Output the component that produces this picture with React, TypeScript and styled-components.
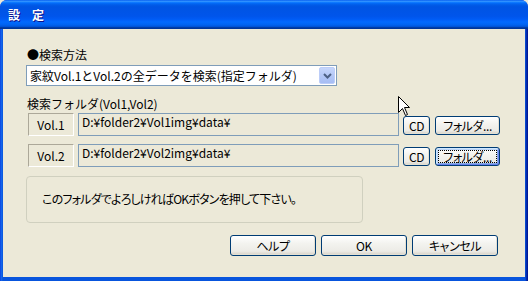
import React from "react";
import styled, { createGlobalStyle } from "styled-components";

const GlobalStyle = createGlobalStyle`
  html, body { margin: 0; padding: 0; background: #ECE9D8; }
  body { font-family: "Noto Sans CJK JP", "Noto Sans", sans-serif; font-size: 12px; }
`;

const Window = styled.div`
  position: relative;
  width: 528px;
  height: 281px;
  display: flex;
  flex-direction: column;
  border-radius: 7px 7px 0 0;
  overflow: hidden;
  background: #0831d9;
`;

const TitleBar = styled.div`
  height: 29px;
  flex: none;
  display: flex;
  align-items: center;
  padding-left: 8px;
  box-sizing: border-box;
  background: linear-gradient(
    to bottom,
    #0058ee 0%,
    #3593ff 4%,
    #288eff 6%,
    #127dff 8%,
    #036ffc 10%,
    #0262ee 14%,
    #0057e5 20%,
    #0054e3 24%,
    #0055eb 56%,
    #005bf5 66%,
    #026afe 76%,
    #0062ef 86%,
    #0052d6 92%,
    #0040ab 94%,
    #003092 100%
  );
`;

const Title = styled.span`
  color: #fff;
  font-weight: bold;
  font-size: 12px;
  line-height: 14px;
  margin-top: 1px;
  text-shadow: 1px 1px #0f1089;
`;

const Frame = styled.div`
  flex: 1;
  display: flex;
  padding: 0 3px 4px 3px;
  background: linear-gradient(to right, #0831d9 0, #166aee 1px, #0855dd 3px, #0855dd calc(100% - 3px), #001ea0 calc(100% - 1px), #00138c 100%);
`;

const Client = styled.div`
  flex: 1;
  background: #ece9d8;
  display: flex;
  flex-direction: column;
  padding: 0 0 0 23px;
  color: #000;
`;

const Label = styled.div<{ $top: number }>`
  margin-top: ${(p) => p.$top}px;
  margin-left: 1px;
  height: 14px;
  line-height: 14px;
  font-size: 12px;
  white-space: nowrap;
`;

const Select = styled.div`
  margin-top: 3px;
  width: 311px;
  height: 21px;
  box-sizing: border-box;
  border: 1px solid #7f9db9;
  background: #fff;
  display: flex;
  align-items: center;
  justify-content: space-between;
  padding: 0 1px 0 3px;
`;

const SelectText = styled.span`
  font-size: 12px;
  line-height: 14px;
  white-space: nowrap;
`;

const DropButton = styled.div`
  width: 16px;
  height: 17px;
  box-sizing: border-box;
  border-radius: 2px;
  background: linear-gradient(to bottom, #c6d6fb 0%, #b4c8f6 50%, #a6bdf4 100%);
  border: 1px solid #bccdf8;
  display: flex;
  align-items: center;
  justify-content: center;
`;

const Rows = styled.div`
  margin-top: 2px;
  margin-left: 2px;
  display: flex;
  flex-direction: column;
  gap: 8px;
`;

const Row = styled.div`
  display: flex;
  align-items: flex-end;
  height: 23px;
`;

const VolBox = styled.div`
  width: 46px;
  height: 23px;
  box-sizing: border-box;
  border-top: 1px solid #aca899;
  border-left: 1px solid #aca899;
  border-right: 1px solid #fff;
  border-bottom: 1px solid #fff;
  display: flex;
  align-items: center;
  justify-content: center;
  padding-top: 1px;
  font-size: 12px;
  line-height: 14px;
  flex: none;
`;

const PathField = styled.div`
  margin-left: 4px;
  width: 321px;
  height: 23px;
  box-sizing: border-box;
  border: 1px solid #7f9db9;
  padding: 1px 0 0 3px;
  font-size: 12px;
  line-height: 14px;
  white-space: nowrap;
  flex: none;
`;

const Button = styled.button<{ $w: number; $h: number; $focus?: boolean }>`
  position: relative;
  width: ${(p) => p.$w}px;
  height: ${(p) => p.$h}px;
  box-sizing: border-box;
  flex: none;
  padding: 0;
  margin: 0;
  border: 1px solid #003c74;
  border-radius: 3px;
  background: linear-gradient(to bottom, #ffffff 0%, #f3f3ef 40%, #ecebe6 80%, #d6d0c5 100%);
  box-shadow: ${(p) =>
    p.$focus
      ? "inset 1px 1px #cee7ff, inset -1px -1px #6982ee, inset 2px 2px #bcd4f6, inset -2px -2px #89ade4"
      : "inset -1px -1px #e3e0d3"};
  font-family: "Noto Sans CJK JP", "Noto Sans", sans-serif;
  font-size: 12px;
  line-height: 14px;
  color: #000;
  white-space: nowrap;
  font-feature-settings: "palt";
  letter-spacing: -0.4px;
  &::after {
    content: "";
    display: ${(p) => (p.$focus ? "block" : "none")};
    position: absolute;
    inset: 2px;
    border: 1px dotted #000;
  }
`;

const SmallButtons = styled.div`
  display: flex;
  gap: 5px;
  margin-left: 4px;
  margin-bottom: 1px;
`;

const InfoBox = styled.div`
  margin-top: 9px;
  width: 337px;
  height: 47px;
  box-sizing: border-box;
  border: 1px solid #d0d0bf;
  border-radius: 4px;
  display: flex;
  align-items: center;
  padding: 0 0 1px 15px;
  font-size: 12px;
  line-height: 14px;
  white-space: nowrap;
  font-feature-settings: "palt";
  letter-spacing: -0.8px;
`;

const Footer = styled.div`
  margin-top: 12px;
  display: flex;
  justify-content: flex-end;
  gap: 5px;
  padding-right: 27px;
`;

const Cursor = styled.svg`
  position: absolute;
  left: 398px;
  top: 96px;
`;

export default function App() {
  return (
    <>
      <GlobalStyle />
      <Window>
        <TitleBar>
          <Title>設　定</Title>
        </TitleBar>
        <Frame>
          <Client>
            <Label $top={19}>●検索方法</Label>
            <Select>
              <SelectText>家紋Vol.1とVol.2の全データを検索(指定フォルダ)</SelectText>
              <DropButton>
                <svg width="9" height="6" viewBox="0 0 9 6">
                  <path d="M1 1 L4.5 4.5 L8 1" fill="none" stroke="#4d6185" strokeWidth="2" />
                </svg>
              </DropButton>
            </Select>
            <Label $top={11}>検索フォルダ(Vol1,Vol2)</Label>
            <Rows>
              <Row>
                <VolBox>Vol.1</VolBox>
                <PathField>D:¥folder2¥Vol1img¥data¥</PathField>
                <SmallButtons>
                  <Button $w={27} $h={19}>CD</Button>
                  <Button $w={65} $h={19}>フォルダ...</Button>
                </SmallButtons>
              </Row>
              <Row>
                <VolBox>Vol.2</VolBox>
                <PathField>D:¥folder2¥Vol2img¥data¥</PathField>
                <SmallButtons>
                  <Button $w={27} $h={19}>CD</Button>
                  <Button $w={65} $h={19} $focus>フォルダ...</Button>
                </SmallButtons>
              </Row>
            </Rows>
            <InfoBox>このフォルダでよろしければOKボタンを押して下さい。</InfoBox>
            <Footer>
              <Button $w={86} $h={21}>ヘルプ</Button>
              <Button $w={86} $h={21}>OK</Button>
              <Button $w={86} $h={21}>キャンセル</Button>
            </Footer>
          </Client>
        </Frame>
        <Cursor width="13" height="21" viewBox="0 0 13 21">
          <path d="M0.5 0.5 L0.5 16.5 L4.5 12.5 L7.5 19.5 L9.5 18.5 L6.5 11.5 L11.5 11.5 Z" fill="#fff" stroke="#000" strokeWidth="1" />
        </Cursor>
      </Window>
    </>
  );
}
